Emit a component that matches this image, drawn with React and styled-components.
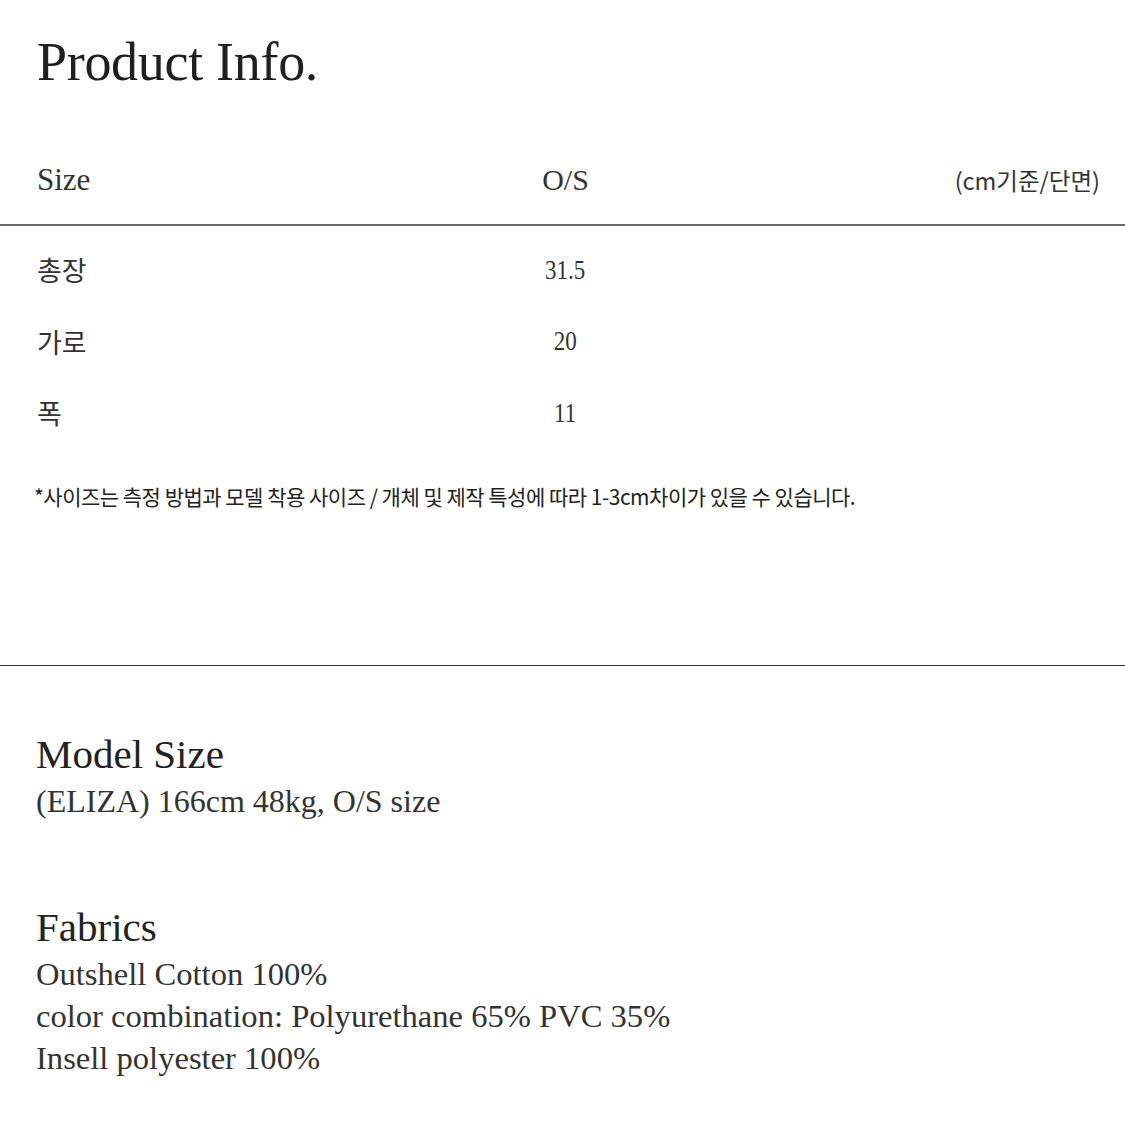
import React from "react";
import styled, { createGlobalStyle } from "styled-components";

const Global = createGlobalStyle`
  html, body { margin: 0; padding: 0; background: #fff; }
  body { font-family: "Liberation Serif", "Noto Sans CJK KR", serif; color: #222; }
`;

const Page = styled.div`
  width: 1125px;
  min-height: 1125px;
  background: #fff;
  overflow: hidden;
`;

const Title = styled.h1`
  margin: 0;
  padding: 32px 0 0 37px;
  font-family: "Liberation Serif", serif;
  font-weight: 400;
  font-size: 54px;
  line-height: 60px;
  color: #1f1f1f;
  letter-spacing: -0.3px;
`;

const Table = styled.div`
  margin-top: 44px;
`;

const Row = styled.div`
  display: grid;
  grid-template-columns: 1fr 1fr 1fr;
  align-items: center;
  height: ${(p) => p.$h}px;
  padding: 0 25px 0 31px;
  border-bottom: ${(p) => (p.$line ? "2px solid #6a6a6a" : "none")};
`;

const Label = styled.div`
  margin-left: 6px;
  font-family: ${(p) => (p.$kr ? '"Noto Sans CJK KR", sans-serif' : '"Liberation Serif", serif')};
  font-size: ${(p) => (p.$kr ? 27 : 31)}px;
  color: #333;
`;

const Value = styled.div`
  text-align: center;
  font-family: "Liberation Serif", serif;
  font-size: ${(p) => p.$size}px;
  color: #333;
  transform: scaleX(${(p) => p.$sx});
`;

const Unit = styled.div`
  text-align: right;
  font-family: "Noto Sans CJK KR", sans-serif;
  font-size: 23.5px;
  color: #333;
`;

const Note = styled.p`
  margin: 32px 0 0 34px;
  font-family: "Noto Sans CJK KR", sans-serif;
  font-size: 21px;
  line-height: 30px;
  color: #222;
  letter-spacing: -0.5px;
  white-space: nowrap;
`;

const Divider = styled.hr`
  margin: 154px 0 0;
  border: 0;
  border-top: 1.5px solid #333;
`;

const Section = styled.section`
  padding: ${(p) => p.$top}px 0 0 36px;
`;

const Heading = styled.h2`
  margin: 0 0 4px;
  font-family: "Liberation Serif", serif;
  font-weight: 400;
  font-size: 41px;
  line-height: 44px;
  color: #222;
`;

const Line = styled.div`
  font-family: "Liberation Serif", serif;
  font-size: ${(p) => p.$size || 32}px;
  line-height: 42px;
  color: #333;
  white-space: nowrap;
`;

export default function App() {
  const rows = [
    ["총장", "31.5"],
    ["가로", "20"],
    ["폭", "11"],
  ];
  return (
    <Page>
      <Global />
      <Title>Product Info.</Title>
      <Table>
        <Row $h={88} $line>
          <Label>Size</Label>
          <Value $size={30} $sx={1}>O/S</Value>
          <Unit>(cm기준/단면)</Unit>
        </Row>
        {rows.map(([k, v], i) => (
          <Row key={k} $h={71.5} style={i === 0 ? { marginTop: 8 } : undefined}>
            <Label $kr>{k}</Label>
            <Value $size={28} $sx={0.82}>{v}</Value>
            <div />
          </Row>
        ))}
      </Table>
      <Note>*사이즈는 측정 방법과 모델 착용 사이즈 / 개체 및 제작 특성에 따라 1-3cm차이가 있을 수 있습니다.</Note>
      <Divider />
      <Section $top={66}>
        <Heading>Model Size</Heading>
        <Line>(ELIZA) 166cm 48kg, O/S size</Line>
      </Section>
      <Section $top={83}>
        <Heading>Fabrics</Heading>
        <Line $size={32.6}>Outshell Cotton 100%</Line>
        <Line $size={32.6}>color combination: Polyurethane 65% PVC 35%</Line>
        <Line $size={32.6}>Insell polyester 100%</Line>
      </Section>
    </Page>
  );
}
